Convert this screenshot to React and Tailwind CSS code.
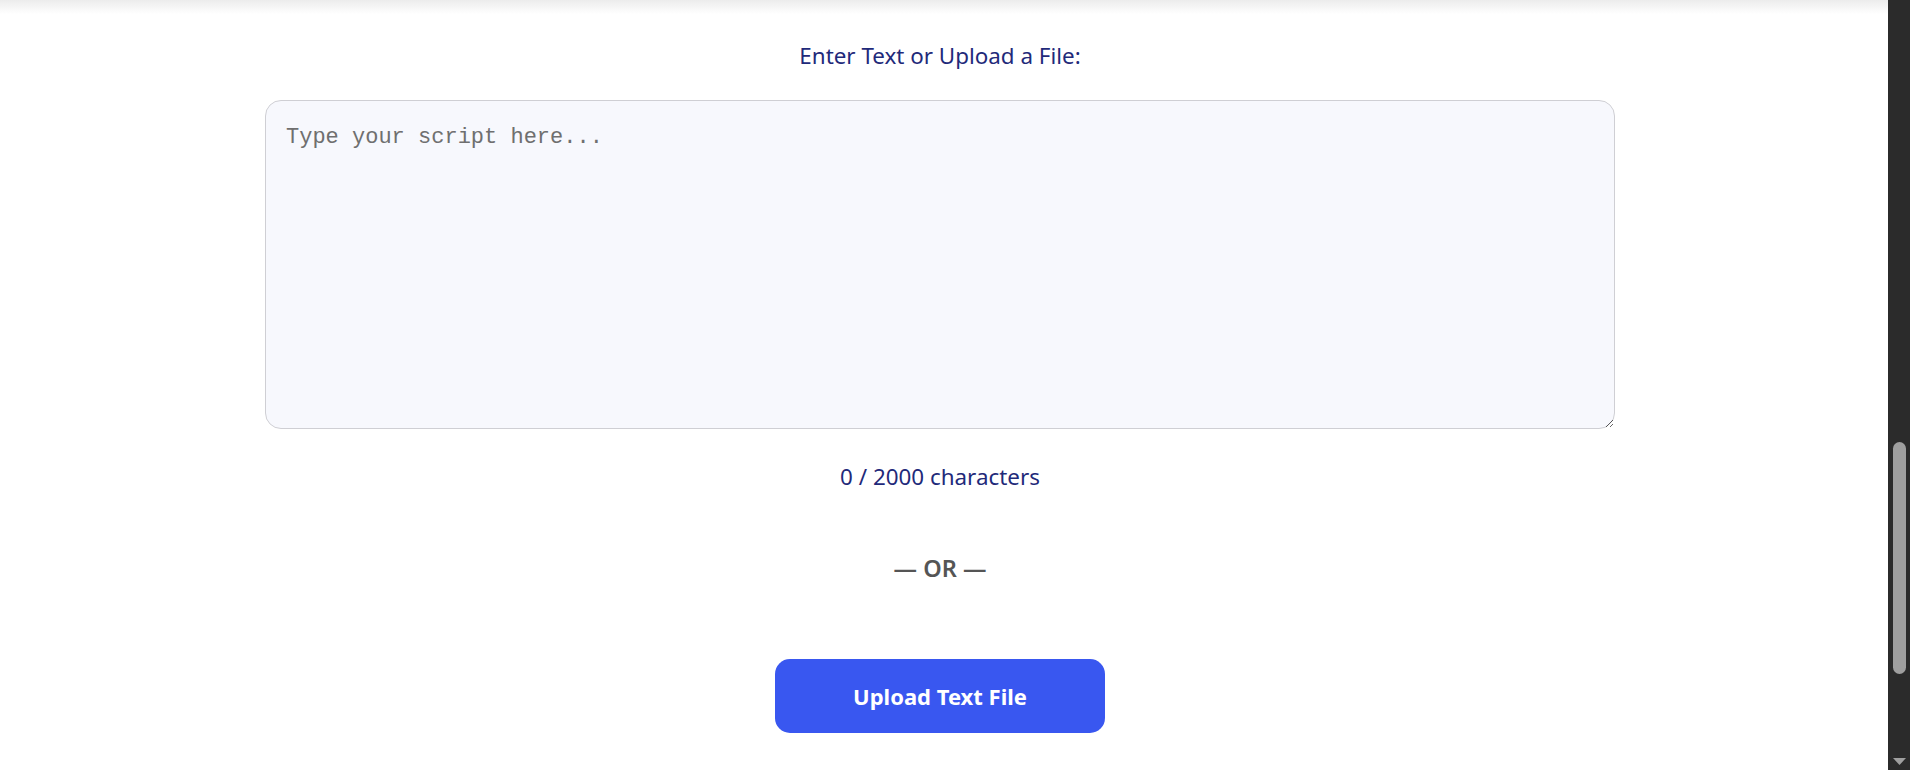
import React from "react";

export default function App() {
  return (
    <div className="flex h-[770px] w-full overflow-hidden bg-white">
      <div className="flex min-w-0 flex-1 flex-col">
        <div className="h-[14px] w-full bg-gradient-to-b from-[#ececec] to-white" />
        <div className="flex flex-col items-center pr-[8px]">
          <h2
            className="mt-[28px] text-[22.4px] leading-[28px] text-[#1f2a7a]"
            style={{ fontFamily: '"Noto Sans", sans-serif' }}
          >
            Enter Text or Upload a File:
          </h2>
          <textarea
            placeholder="Type your script here..."
            className="mt-[30px] h-[329px] w-[1350px] rounded-[16px] border border-[#cfcfd4] bg-[#f7f8fd] px-[20px] pb-[16px] pt-[22px] text-[22px] leading-[30px] text-[#333] outline-none placeholder:text-[#6f6f6f]"
            style={{ fontFamily: '"Liberation Mono", monospace' }}
          />
          <div
            className="mt-[34px] text-[22.4px] leading-[28px] text-[#1f2a7a]"
            style={{ fontFamily: '"Noto Sans", sans-serif' }}
          >
            0 / 2000 characters
          </div>
          <div
            className="mt-[63px] text-[23.5px] font-semibold leading-[28px] text-[#555]"
            style={{ fontFamily: '"Noto Sans", sans-serif' }}
          >
            — OR —
          </div>
          <button
            className="mt-[77px] flex h-[74px] w-[330px] items-center justify-center rounded-[15px] bg-[#3957f0] text-[22px] font-bold text-white"
            style={{ fontFamily: '"Noto Sans", sans-serif' }}
          >
            Upload Text File
          </button>
        </div>
      </div>
      <div className="relative h-full w-[22px] shrink-0 bg-[#2b2b2b]">
        <div className="absolute left-[5px] top-[442px] h-[232px] w-[13px] rounded-full bg-[#9f9f9f]" />
        <svg
          className="absolute bottom-[4px] left-[5px]"
          width="13"
          height="9"
          viewBox="0 0 13 9"
        >
          <path d="M0 1 L13 1 L6.5 8 Z" fill="#9f9f9f" />
        </svg>
      </div>
    </div>
  );
}
